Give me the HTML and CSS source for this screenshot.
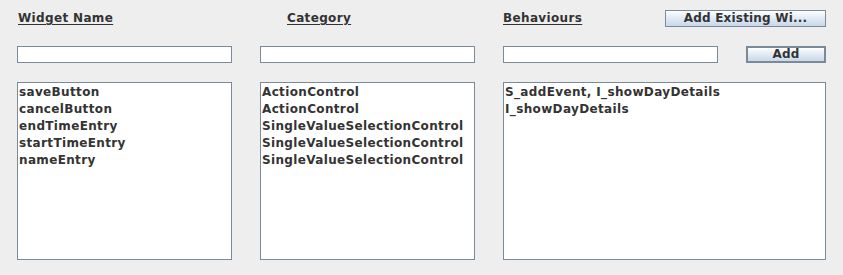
FILE: index.html
```html
<!DOCTYPE html>
<html>
<head>
<meta charset="utf-8">
<link rel="stylesheet" href="styles.css">
</head>
<body>
<div class="panel">
  <div class="cell label-cell"><span class="label">Widget Name</span></div>
  <div class="cell label-cell indent"><span class="label">Category</span></div>
  <div class="cell label-cell wide">
    <span class="label">Behaviours</span>
    <button class="btn btn-existing">Add Existing Wi...</button>
  </div>

  <div class="field"></div>
  <div class="field"></div>
  <div class="field"></div>
  <button class="btn btn-add">Add</button>

  <ul class="list">
    <li>saveButton</li>
    <li>cancelButton</li>
    <li>endTimeEntry</li>
    <li>startTimeEntry</li>
    <li>nameEntry</li>
  </ul>
  <ul class="list">
    <li>ActionControl</li>
    <li>ActionControl</li>
    <li>SingleValueSelectionControl</li>
    <li>SingleValueSelectionControl</li>
    <li>SingleValueSelectionControl</li>
  </ul>
  <ul class="list wide">
    <li>S_addEvent, I_showDayDetails</li>
    <li>I_showDayDetails</li>
  </ul>
</div>
</body>
</html>
```
FILE: styles.css
```css
html, body {
  margin: 0;
  padding: 0;
  background: #eeeeee;
  width: 843px;
  height: 275px;
  overflow: hidden;
}
body {
  font-family: "DejaVu Sans", "Liberation Sans", sans-serif;
  font-weight: bold;
  font-size: 12px;
  letter-spacing: 0.35px;
  color: #333333;
}
.panel {
  display: grid;
  grid-template-columns: 215px 215px 215px 80px;
  grid-template-rows: 17px 17px 178px;
  column-gap: 28px;
  row-gap: 19px;
  padding: 10px 0 0 17px;
}
.cell {
  display: flex;
  align-items: center;
}
.label-cell {
  padding-left: 1px;
}
.indent {
  padding-left: 27px;
}
.wide {
  grid-column: 3 / 5;
}
.label-cell.wide {
  justify-content: space-between;
  padding-left: 0;
}
.label {
  text-decoration: underline;
  text-underline-offset: 2px;
  line-height: 17px;
}
.field {
  box-sizing: border-box;
  height: 17px;
  background: #ffffff;
  border: 1px solid #7a8a99;
}
.btn {
  box-sizing: border-box;
  margin: 0;
  padding: 0;
  font: inherit;
  letter-spacing: 0.2px;
  color: #333333;
  background: linear-gradient(to bottom, #ffffff 0%, #e8eff7 35%, #c7d8ea 100%);
  border: 1px solid #7a8a99;
  height: 17px;
  line-height: 15px;
  text-align: center;
}
.btn-existing {
  width: 161px;
}
.btn-add {
  width: 80px;
  border-width: 2px;
  line-height: 13px;
}
.list {
  box-sizing: border-box;
  margin: 0;
  padding: 1px 0 0 1px;
  list-style: none;
  background: #ffffff;
  border: 1px solid #7a8a99;
}
.list li {
  height: 17px;
  line-height: 17px;
  white-space: nowrap;
}
```
